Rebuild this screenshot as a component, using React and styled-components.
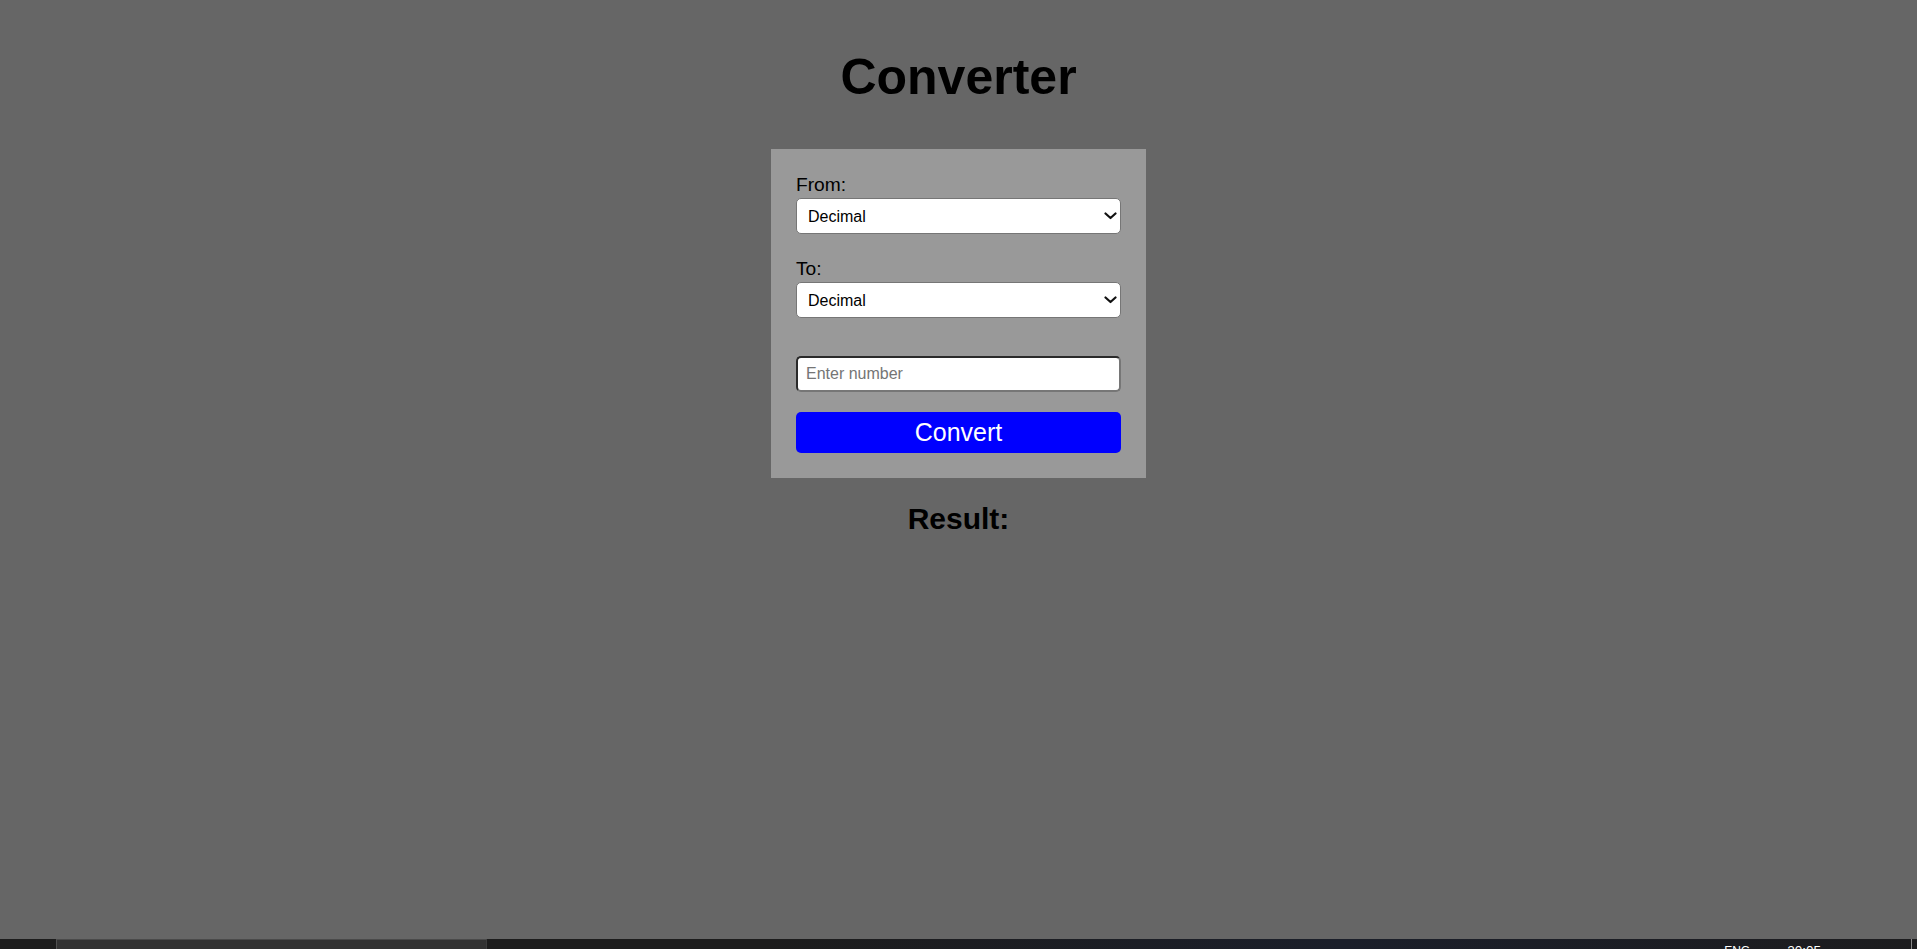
import React from "react";
import styled, { createGlobalStyle } from "styled-components";

const GlobalStyle = createGlobalStyle`
  html, body {
    margin: 0;
    padding: 0;
  }
  body {
    background: #666666;
    font-family: "Liberation Sans", Arial, sans-serif;
    color: #000;
  }
  * { box-sizing: border-box; }
`;

const Page = styled.div`
  min-height: 100vh;
  display: flex;
  flex-direction: column;
`;

const Main = styled.main`
  flex: 1;
  display: flex;
  flex-direction: column;
  align-items: center;
  padding-top: 49px;
`;

const Title = styled.h1`
  margin: 0;
  font-size: 50px;
  line-height: 57px;
  font-weight: bold;
`;

const Card = styled.form`
  margin-top: 43px;
  width: 375px;
  padding: 25px;
  background: #999999;
  display: flex;
  flex-direction: column;
`;

const Field = styled.div`
  display: flex;
  flex-direction: column;
  margin-top: ${(p) => (p.$first ? "0" : "24px")};
`;

const Label = styled.label`
  font-size: 19.2px;
  line-height: 22px;
  margin-bottom: 2px;
  color: #000;
`;

const SelectWrap = styled.div`
  position: relative;
  width: 100%;
`;

const Select = styled.select`
  appearance: none;
  -webkit-appearance: none;
  display: block;
  width: 100%;
  height: 36px;
  padding: 0 28px 0 11px;
  font-family: "Liberation Sans", Arial, sans-serif;
  font-size: 16px;
  color: #000;
  background: #fff;
  border: 1px solid #767676;
  border-radius: 5px;
`;

const Chevron = styled.svg`
  position: absolute;
  right: 4px;
  top: 50%;
  width: 13px;
  height: 8px;
  margin-top: -4px;
  pointer-events: none;
`;

const NumberInput = styled.input`
  margin-top: 38px;
  width: 100%;
  height: 36px;
  padding: 0 8px;
  font-family: "Liberation Sans", Arial, sans-serif;
  font-size: 16px;
  background: #fff;
  border-width: 2px;
  border-style: solid;
  border-color: #2a2a2a #767676 #767676 #2a2a2a;
  border-radius: 5px;
  outline: none;
  &::placeholder {
    color: #757575;
  }
`;

const Button = styled.button`
  margin-top: 20px;
  width: 100%;
  height: 41px;
  padding: 0;
  background: #0000ff;
  color: #fff;
  border: none;
  border-radius: 5px;
  font-family: "Liberation Sans", Arial, sans-serif;
  font-size: 25px;
  cursor: pointer;
`;

const Result = styled.h2`
  margin: 23px 0 0;
  font-size: 30px;
  line-height: 35px;
  font-weight: bold;
`;

const Taskbar = styled.div`
  height: 10px;
  display: flex;
  overflow: hidden;
  background: linear-gradient(90deg, #1c1c1c 0%, #1c1c1c 40%, #1b1f2a 70%, #1c1c1e 100%);
`;

const StartArea = styled.div`
  width: 57px;
  background: #1c1c1c;
  border-right: 1px solid #4f4f4f;
`;

const SearchBox = styled.div`
  width: 430px;
  background: #323232;
  border-top: 1px solid #4a4a4a;
  border-right: 1px solid #3c3c3c;
`;

const Tray = styled.div`
  flex: 1;
  display: flex;
  justify-content: flex-end;
  align-items: flex-start;
`;

const TrayText = styled.span`
  font-family: "Liberation Sans", Arial, sans-serif;
  font-size: ${(p) => (p.$size ? p.$size : "12px")};
  line-height: 16px;
  color: #fff;
  margin-top: 4px;
  margin-right: ${(p) => p.$gap || "0"};
  white-space: nowrap;
`;

const Divider = styled.div`
  width: 1px;
  height: 10px;
  background: #8a8a8a;
  margin-right: 5px;
`;

function ChevronIcon() {
  return (
    <Chevron viewBox="0 0 13 8" aria-hidden="true">
      <path
        d="M1.5 1.5 L6.5 6 L11.5 1.5"
        fill="none"
        stroke="#111"
        strokeWidth="2.2"
        strokeLinecap="round"
        strokeLinejoin="round"
      />
    </Chevron>
  );
}

function BaseSelect({ id }) {
  return (
    <SelectWrap>
      <Select id={id} defaultValue="decimal">
        <option value="decimal">Decimal</option>
        <option value="binary">Binary</option>
        <option value="octal">Octal</option>
        <option value="hex">Hexadecimal</option>
      </Select>
      <ChevronIcon />
    </SelectWrap>
  );
}

export default function App() {
  return (
    <Page>
      <GlobalStyle />
      <Main>
        <Title>Converter</Title>
        <Card onSubmit={(e) => e.preventDefault()}>
          <Field $first>
            <Label htmlFor="from">From:</Label>
            <BaseSelect id="from" />
          </Field>
          <Field>
            <Label htmlFor="to">To:</Label>
            <BaseSelect id="to" />
          </Field>
          <NumberInput type="text" placeholder="Enter number" />
          <Button type="submit">Convert</Button>
        </Card>
        <Result>Result:</Result>
      </Main>
      <Taskbar>
        <StartArea />
        <SearchBox />
        <Tray>
          <TrayText $gap="37px">ENG</TrayText>
          <TrayText $size="13.5px" $gap="90px">20:05</TrayText>
          <Divider />
        </Tray>
      </Taskbar>
    </Page>
  );
}
